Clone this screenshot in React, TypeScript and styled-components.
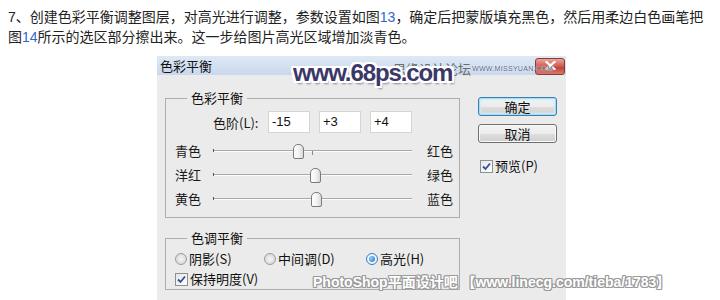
import React from 'react';
import styled, { createGlobalStyle, css } from 'styled-components';

const Global = createGlobalStyle`
  html, body { margin: 0; padding: 0; background: #fff; }
  body { font-family: "Noto Sans CJK SC", "Liberation Sans", sans-serif; }
`;

const Page = styled.div`
  position: relative;
  width: 720px;
  height: 300px;
  overflow: hidden;
  padding: 7px 0 0 8px;
  box-sizing: border-box;
`;

const Para = styled.p`
  margin: 0;
  width: 708px;
  font-family: "Liberation Sans", "Noto Sans CJK SC", sans-serif;
  font-size: 14px;
  line-height: 20px;
  color: #222;
  white-space: nowrap;
`;

const Num = styled.span`
  color: #3366cc;
`;

const Dialog = styled.div`
  position: relative;
  margin: 9px 0 0 149px;
  width: 409px;
  height: 244px;
  background: #ebebeb;
  display: flex;
  flex-direction: column;
  font-family: "Noto Sans CJK SC", "Liberation Sans", sans-serif;
  font-size: 13px;
  color: #1a1a1a;
`;

const TitleBar = styled.div`
  height: 19px;
  display: flex;
  align-items: center;
  padding-left: 3px;
  background: linear-gradient(#dfe9f6, #c9d8ec);
`;

const TitleText = styled.span`
  font-size: 13px;
  line-height: 19px;
  color: #111;
`;

const CloseBtn = styled.div`
  margin-left: auto;
  margin-right: 1px;
  align-self: flex-start;
  margin-top: 2px;
  width: 30px;
  height: 17px;
  border-radius: 3px;
  border: 1px solid #8a3a36;
  box-sizing: border-box;
  background: linear-gradient(#e9a79c, #d0584c 50%, #c0392f 51%, #d77a6e);
  display: flex;
  align-items: flex-start;
  padding-top: 2px;
  justify-content: center;
`;

const Body = styled.div`
  display: flex;
  padding: 15px 0 0 8px;
`;

const LeftCol = styled.div`
  display: flex;
  flex-direction: column;
  gap: 12px;
  width: 295px;
`;

const Group = styled.fieldset<{ $h: number }>`
  margin: 0;
  width: 295px;
  height: ${(p) => p.$h}px;
  box-sizing: border-box;
  border: 1px solid #aeaeae;
  padding: 0 6px 0 9px;
  min-width: 0;
`;

const Legend = styled.legend`
  margin-left: 12px;
  padding: 0 4px;
  font-size: 13px;
  line-height: 16px;
  color: #111;
`;

const LevelsRow = styled.div`
  display: flex;
  align-items: center;
  height: 22px;
  margin-top: 5px;
  padding-left: 38px;
  gap: 9px;
`;

const LevelsLabel = styled.span`
  width: 46px;
  white-space: nowrap;
  font-size: 13px;
`;

const NumBox = styled.div`
  width: 42px;
  height: 22px;
  box-sizing: border-box;
  background: #fff;
  border: 1px solid #d4d4d4;
  padding-left: 3px;
  font-family: "Liberation Sans", sans-serif;
  font-size: 13px;
  line-height: 20px;
  color: #111;
`;

const SliderRow = styled.div<{ $first?: boolean }>`
  display: flex;
  align-items: center;
  height: 24px;
  margin-top: ${(p) => (p.$first ? 6 : 0)}px;
`;

const SideLabel = styled.span<{ $right?: boolean }>`
  width: ${(p) => (p.$right ? 'auto' : '38px')};
  margin-left: ${(p) => (p.$right ? '15px' : '0')};
  font-size: 13px;
  line-height: 16px;
`;

const Track = styled.div`
  position: relative;
  width: 199px;
  height: 24px;
  flex: none;
`;

const TrackLine = styled.div`
  position: absolute;
  left: 0;
  right: 0;
  top: 11px;
  height: 1px;
  background: #a9a9a9;
  border-bottom: 1px solid #fbfbfb;
`;

const Tick = styled.div<{ $center?: boolean }>`
  position: absolute;
  width: 1px;
  background: #555;
  ${(p) =>
    p.$center
      ? css`
          left: 99px;
          top: 12px;
          height: 4px;
          background: #8a8a8a;
        `
      : css`
          left: 0;
          top: 10px;
          height: 3px;
        `}
`;

const Thumb = styled.div`
  position: absolute;
  top: 5px;
  width: 11px;
  height: 15px;
  margin-left: -5px;
  box-sizing: border-box;
  border: 1px solid #7c7c7c;
  border-radius: 5px 5px 2px 2px;
  background: linear-gradient(90deg, #ffffff, #f4f4f4 50%, #d9d9d9);
`;

const ToneRow = styled.div<{ $first?: boolean }>`
  display: grid;
  grid-template-columns: 89px 102px auto;
  align-items: center;
  height: 20px;
  margin-top: ${(p) => (p.$first ? 3 : 0)}px;
`;

const Option = styled.label`
  display: flex;
  align-items: center;
  gap: 2px;
  font-size: 13px;
  line-height: 16px;
  color: #111;
  white-space: nowrap;
`;

const Radio = styled.span<{ $on?: boolean }>`
  width: 12px;
  height: 12px;
  border-radius: 50%;
  box-sizing: border-box;
  flex: none;
  display: flex;
  align-items: center;
  justify-content: center;
  border: 1px solid ${(p) => (p.$on ? '#3d7bbf' : '#9c9c9c')};
  background: ${(p) =>
    p.$on ? 'radial-gradient(#ffffff, #dfeefb)' : 'radial-gradient(#f6f6f6, #d0d0d0)'};
  &::after {
    content: '';
    display: ${(p) => (p.$on ? 'block' : 'none')};
    width: 6px;
    height: 6px;
    border-radius: 50%;
    background: radial-gradient(circle at 35% 35%, #8fd0ff, #1f6fc4);
  }
`;

const Box = styled.span`
  width: 13px;
  height: 13px;
  box-sizing: border-box;
  flex: none;
  border: 1px solid #8e8f8f;
  background: linear-gradient(135deg, #e6e6e6, #ffffff);
  display: flex;
  align-items: center;
  justify-content: center;
`;

const RightCol = styled.div`
  display: flex;
  flex-direction: column;
  margin-left: 18px;
  padding-top: 7px;
`;

const Button = styled.div<{ $default?: boolean }>`
  width: 79px;
  height: 19px;
  box-sizing: border-box;
  border-radius: 3px;
  display: flex;
  align-items: center;
  justify-content: center;
  font-size: 13px;
  color: #111;
  border: 1px solid ${(p) => (p.$default ? '#3c7fb1' : '#707070')};
  background: linear-gradient(#f3f3f3, #ececec 50%, #dedede 51%, #d0d0d0);
  box-shadow: ${(p) =>
    p.$default ? 'inset 0 0 0 1px #a6ddf4, inset 0 0 2px 2px #cdeefb' : 'inset 0 0 0 1px #fafafa'};
  & + & {
    margin-top: 8px;
  }
`;

const PreviewRow = styled.div`
  margin-top: 15px;
  padding-left: 2px;
`;

const Mark68 = styled.div`
  position: absolute;
  left: 136px;
  top: 4px;
  white-space: nowrap;
  font-family: "Liberation Sans", sans-serif;
  font-weight: 700;
  font-size: 24px;
  line-height: 26px;
  letter-spacing: -1.1px;
  color: #3b3868;
  text-shadow:
    2px 0 0 #fff, -2px 0 0 #fff, 0 2px 0 #fff, 0 -2px 0 #fff,
    2px 2px 0 #fff, -2px -2px 0 #fff, 2px -2px 0 #fff, -2px 2px 0 #fff,
    2px 3px 2px rgba(60, 60, 90, 0.6);
  z-index: 2;
`;

const MarkCN = styled.div`
  position: absolute;
  left: 236px;
  top: 5px;
  white-space: nowrap;
  font-size: 13px;
  line-height: 16px;
  color: #6d6d6d;
  z-index: 1;
`;

const MarkMiss = styled.div`
  position: absolute;
  left: 315px;
  top: 8px;
  white-space: nowrap;
  font-family: "Liberation Sans", sans-serif;
  font-size: 7px;
  line-height: 10px;
  letter-spacing: 0.3px;
  color: #4f5f80;
  text-shadow: 0 0 1px #fff, 0 0 1px #fff;
  z-index: 3;
`;

const BottomMark = styled.div`
  position: absolute;
  left: 313px;
  top: 274px;
  font-family: "Liberation Sans", "Noto Sans CJK SC", sans-serif;
  font-weight: 700;
  font-size: 14px;
  line-height: 16px;
  color: #ffffff;
  white-space: nowrap;
  text-shadow:
    1px 0 0 #9a9a9a, -1px 0 0 #9a9a9a, 0 1px 0 #9a9a9a, 0 -1px 0 #9a9a9a,
    1px 1px 0 #9a9a9a, -1px -1px 0 #9a9a9a, 1px -1px 0 #9a9a9a, -1px 1px 0 #9a9a9a;
`;

const Check = () => (
  <svg width="9" height="9" viewBox="0 0 9 9">
    <path d="M1 4.5 L3.5 7 L8 1.5" fill="none" stroke="#2c4f9e" strokeWidth="1.8" />
  </svg>
);

const CloseX = () => (
  <svg width="11" height="9" viewBox="0 0 11 9">
    <path d="M1.5 1 L9.5 8 M9.5 1 L1.5 8" stroke="#fff" strokeWidth="2.2" strokeLinecap="square" />
  </svg>
);

const sliders = [
  { left: '青色', right: '红色', value: -15 },
  { left: '洋红', right: '绿色', value: 3 },
  { left: '黄色', right: '蓝色', value: 4 },
];

const toPos = (v: number) => 99.5 + (v / 100) * 99;

export default function App() {
  return (
    <Page>
      <Global />
      <Para>
        7、创建色彩平衡调整图层，对高光进行调整，参数设置如图<Num>13</Num>，确定后把蒙版填充黑色，然后用柔边白色画笔把
        <br />
        图<Num>14</Num>所示的选区部分擦出来。这一步给图片高光区域增加淡青色。
      </Para>
      <Dialog>
        <TitleBar>
          <TitleText>色彩平衡</TitleText>
          <CloseBtn>
            <CloseX />
          </CloseBtn>
        </TitleBar>
        <MarkCN>思缘设计论坛</MarkCN>
        <Mark68>www.68ps.com</Mark68>
        <MarkMiss>WWW.MISSYUAN.COM</MarkMiss>
        <Body>
          <LeftCol>
            <Group $h={128}>
              <Legend>色彩平衡</Legend>
              <LevelsRow>
                <LevelsLabel>色阶(L):</LevelsLabel>
                <NumBox>-15</NumBox>
                <NumBox>+3</NumBox>
                <NumBox>+4</NumBox>
              </LevelsRow>
              {sliders.map((s, i) => (
                <SliderRow key={s.left} $first={i === 0}>
                  <SideLabel>{s.left}</SideLabel>
                  <Track>
                    <TrackLine />
                    <Tick />
                    <Tick $center />
                    <Thumb style={{ left: `${toPos(s.value)}px` }} />
                  </Track>
                  <SideLabel $right>{s.right}</SideLabel>
                </SliderRow>
              ))}
            </Group>
            <Group $h={60}>
              <Legend>色调平衡</Legend>
              <ToneRow $first>
                <Option>
                  <Radio />
                  阴影(S)
                </Option>
                <Option>
                  <Radio />
                  中间调(D)
                </Option>
                <Option>
                  <Radio $on />
                  高光(H)
                </Option>
              </ToneRow>
              <ToneRow>
                <Option>
                  <Box>
                    <Check />
                  </Box>
                  保持明度(V)
                </Option>
              </ToneRow>
            </Group>
          </LeftCol>
          <RightCol>
            <Button $default>确定</Button>
            <Button>取消</Button>
            <PreviewRow>
              <Option>
                <Box>
                  <Check />
                </Box>
                预览(P)
              </Option>
            </PreviewRow>
          </RightCol>
        </Body>
      </Dialog>
      <BottomMark>PhotoShop平面设计吧 【www.linecg.com/tieba/1783】</BottomMark>
    </Page>
  );
}
